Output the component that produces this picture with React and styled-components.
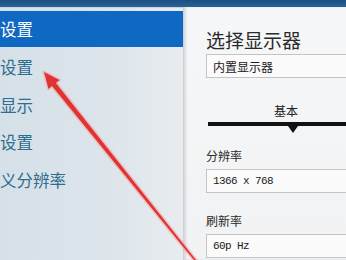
import React from "react";
import styled, { createGlobalStyle } from "styled-components";

const GlobalStyle = createGlobalStyle`
  html, body {
    margin: 0;
    padding: 0;
    width: 346px;
    height: 260px;
    overflow: hidden;
    background: #e3e9ee;
  }
  * {
    box-sizing: border-box;
  }
`;

const menuItems = [
  { label: "设置", selected: true },
  { label: "设置" },
  { label: "显示" },
  { label: "设置" },
  { label: "义分辨率" },
];

function Arrow() {
  return (
    <ArrowLayer width="346" height="260" viewBox="0 0 346 260">
      <polygon
        points="44,72 59.5,80.1 55.9,82.9 197.6,262 196.4,263 52,86 48.5,88.9"
        fill="#f08080"
        stroke="#f4a0a0"
        strokeWidth="3"
        strokeLinejoin="round"
        opacity="0.55"
      />
      <polygon
        points="44,72 59.5,80.1 55.9,82.9 197.6,262 196.4,263 52,86 48.5,88.9"
        fill="#e03434"
      />
    </ArrowLayer>
  );
}

export default function App() {
  return (
    <>
      <GlobalStyle />
      <Screen>
        <TopBar />
        <Body>
          <Sidebar>
            {menuItems.map((item, index) => (
              <MenuItem key={index} $selected={item.selected}>
                {item.label}
              </MenuItem>
            ))}
          </Sidebar>
          <Panel>
            <Title>选择显示器</Title>
            <Field>内置显示器</Field>
            <TabLabel>基本</TabLabel>
            <TabLine />
            <TabPointer />
            <Label>分辨率</Label>
            <Field $mono>1366 x 768</Field>
            <Label $gap={21}>刷新率</Label>
            <Field $mono>60p Hz</Field>
          </Panel>
        </Body>
        <Arrow />
      </Screen>
    </>
  );
}

const Screen = styled.div`
  position: relative;
  width: 346px;
  height: 260px;
  overflow: hidden;
  display: flex;
  flex-direction: column;
  font-family: "Noto Sans CJK SC", "Noto Sans", sans-serif;
`;

const TopBar = styled.div`
  height: 7px;
  flex: none;
  background: linear-gradient(to bottom, #1d4f82, #2a6198);
`;

const Body = styled.div`
  flex: 1;
  display: flex;
  min-height: 0;
`;

const Sidebar = styled.div`
  width: 183px;
  flex: none;
  padding-top: 3px;
  background: linear-gradient(to right, #d5e0e8 0%, #dde5eb 60%, #e8ecef 100%);
  border-top: 1px solid #c4d5e4;
  display: flex;
  flex-direction: column;
`;

const MenuItem = styled.div`
  height: 37.5px;
  display: flex;
  align-items: center;
  font-size: 16.5px;
  color: ${(p) => (p.$selected ? "#ffffff" : "#2f6d8f")};
  background: ${(p) => (p.$selected ? "#0f68c2" : "transparent")};
  ${(p) => p.$selected && "height: 36px; margin-bottom: 1.5px;"}
`;

const Panel = styled.div`
  flex: 1;
  min-width: 0;
  overflow: hidden;
  padding: 22px 0 0 22px;
  background: linear-gradient(to bottom, #f6f7f8, #f0f2f3);
  border-left: 1px solid #c9d2da;
  box-shadow: inset 2px 0 2px rgba(160, 175, 190, 0.35);
  display: flex;
  flex-direction: column;
  align-items: flex-start;
`;

const Title = styled.div`
  font-size: 19px;
  line-height: 22px;
  color: #2b2b2b;
  white-space: nowrap;
`;

const Field = styled.div`
  width: 200px;
  height: 24px;
  flex: none;
  margin-top: 3px;
  padding-left: 6px;
  display: flex;
  align-items: center;
  background: #fbfbfb;
  border: 1px solid #c4c4c4;
  font-size: ${(p) => (p.$mono ? "11px" : "12px")};
  letter-spacing: ${(p) => (p.$mono ? "-0.6px" : "0")};
  font-family: ${(p) =>
    p.$mono
      ? '"Liberation Mono", monospace'
      : '"Noto Sans CJK SC", sans-serif'};
  color: #1a1a1a;
  white-space: nowrap;
`;

const TabLabel = styled.div`
  margin-top: 26px;
  margin-left: 68px;
  font-size: 12px;
  line-height: 14px;
  color: #222;
`;

const TabLine = styled.div`
  margin-top: 4px;
  margin-left: 2px;
  width: 200px;
  height: 4px;
  background: #111;
`;

const TabPointer = styled.div`
  margin-left: 82px;
  width: 0;
  height: 0;
  border-left: 5px solid transparent;
  border-right: 5px solid transparent;
  border-top: 7px solid #111;
`;

const Label = styled.div`
  margin-top: ${(p) => p.$gap ?? 16}px;
  margin-bottom: 3px;
  font-size: 12px;
  line-height: 14px;
  color: #2a2a2a;
`;

const ArrowLayer = styled.svg`
  position: absolute;
  left: 0;
  top: 0;
  pointer-events: none;
`;
